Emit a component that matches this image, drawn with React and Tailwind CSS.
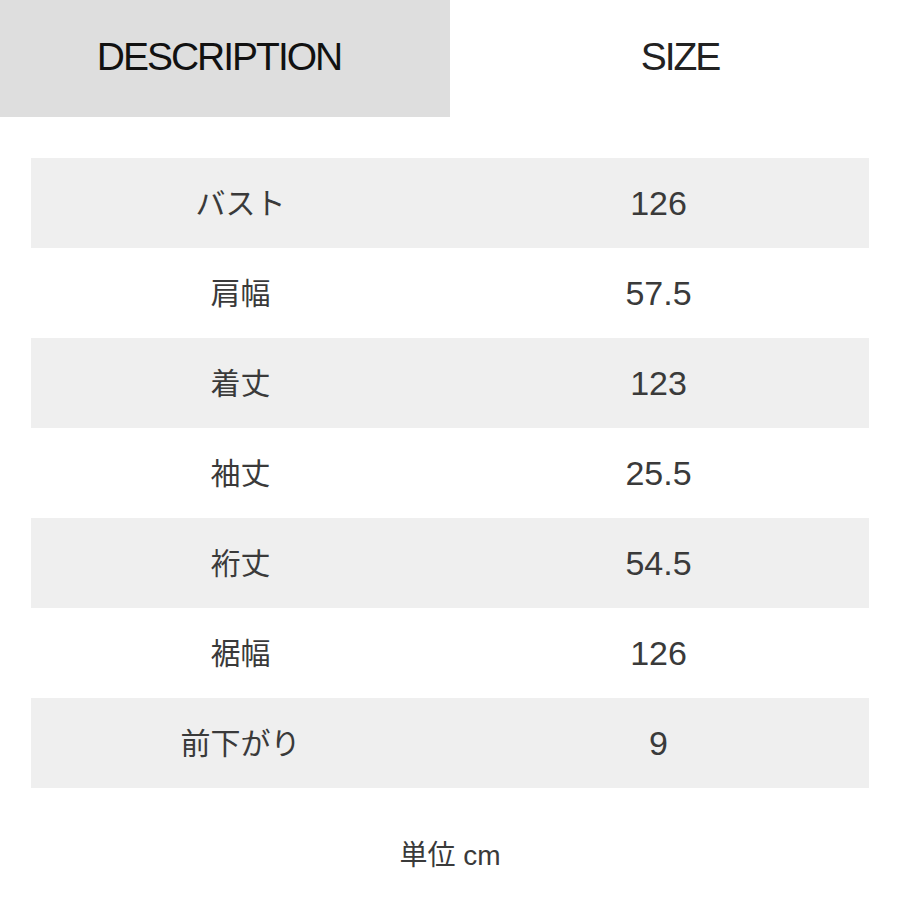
import React from 'react';

const rows = [
  ['バスト', '126'],
  ['肩幅', '57.5'],
  ['着丈', '123'],
  ['袖丈', '25.5'],
  ['裄丈', '54.5'],
  ['裾幅', '126'],
  ['前下がり', '9'],
];

const jp = { fontFamily: '"Liberation Sans", "Noto Sans CJK JP", sans-serif' };

const App = () => {
  return (
    <div className="w-[900px] h-[900px] bg-white text-[#3a3a3a]" style={jp}>
      <div className="flex h-[117px]">
        <div className="w-[450px] bg-[#dedede] flex items-center justify-center pb-[2px] pr-[12px]">
          <span className="text-[39px] tracking-[-2px] text-[#111]">DESCRIPTION</span>
        </div>
        <div className="w-[450px] flex items-center justify-center pb-[2px] pl-[10px]">
          <span className="text-[39px] tracking-[-2px] text-[#222]">SIZE</span>
        </div>
      </div>

      <div className="mt-[41px] mx-[31px]">
        {rows.map(([label, value], i) => (
          <div
            key={label}
            className={`grid grid-cols-2 h-[90px] items-center ${i % 2 === 0 ? 'bg-[#efefef]' : 'bg-white'}`}
          >
            <div className="text-center text-[30px]">{label}</div>
            <div className="text-center text-[34px] pr-[2px]">{value}</div>
          </div>
        ))}
      </div>

      <div className="mt-[47px] text-center text-[28px]">単位 cm</div>
    </div>
  );
};

export default App;
